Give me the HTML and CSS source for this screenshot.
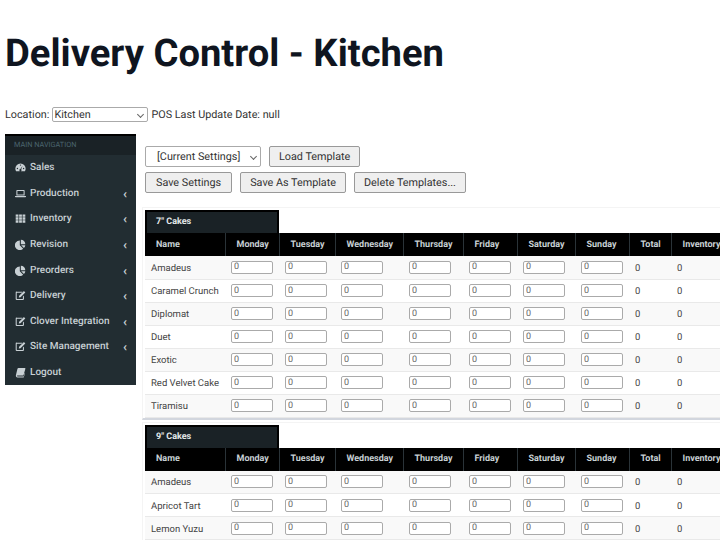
FILE: index.html
```html
<!DOCTYPE html>
<html lang="en">
<head>
  <meta charset="UTF-8" />
  <title>Delivery Control - Kitchen</title>
  <link rel="stylesheet" href="styles.css">
</head>
<body>
  <svg class="defs" width="0" height="0">
    <symbol id="i-gauge" viewBox="0 0 16 16"><path fill-rule="evenodd" d="M8 2a7.500 7.500 0 0 0-7.500 7.500c0 1.500.4 2.800 1.100 4h12.800c.7-1.200 1.100-2.500 1.100-4A7.500 7.500 0 0 0 8 2zM8 3.500a1 1 0 1 1 0 2 1 1 0 0 1 0-2zM3.500 8.500a1 1 0 1 1 0 2 1 1 0 0 1 0-2zM12.500 8.500a1 1 0 1 1 0 2 1 1 0 0 1 0-2zM11 5.500l-2 5a1.600 1.600 0 1 1-1.200-.4z"/></symbol>
    <symbol id="i-laptop" viewBox="0 0 16 16"><path fill-rule="evenodd" d="M3 3h10a1 1 0 0 1 1 1v7H2V4a1 1 0 0 1 1-1zM3.500 4.500v5h9v-5zM0 11.800h16v.7a1 1 0 0 1-1 1H1a1 1 0 0 1-1-1z"/></symbol>
    <symbol id="i-grid" viewBox="0 0 16 16"><path d="M1 2h4v3.500H1zM6 2h4v3.500H6zM11 2h4v3.500h-4zM1 6.300h4v3.500H1zM6 6.300h4v3.500H6zM11 6.300h4v3.500h-4zM1 10.600h4V14H1zM6 10.600h4V14H6zM11 10.600h4V14h-4z"/></symbol>
    <symbol id="i-pie" viewBox="0 0 16 16"><path d="M7 2.200v7l4.900 4.900A7 7 0 1 1 7 2.200zM8.500 1a6.500 6.500 0 0 1 6.500 6.500H8.500zM9 9h6a7 7 0 0 1-2 4.200z"/></symbol>
    <symbol id="i-edit" viewBox="0 0 16 16"><path fill-rule="evenodd" d="M3 2.500h8l-1.500 1.500H3a.5.5 0 0 0-.5.500v8a.5.5 0 0 0 .5.500h8a.5.5 0 0 0 .5-.5V9.500L13 8v5a1.500 1.500 0 0 1-1.500 1.500H2.500A1.500 1.500 0 0 1 1 13V4a1.500 1.500 0 0 1 2-1.500zM13 1.500l2 2-7 7-2.500.5.500-2.500z"/></symbol>
    <symbol id="i-book" viewBox="0 0 16 16"><path d="M5 1.500h9.500c.6 0 .7.400.6.900l-2.500 9c-.2.600-.5.800-1.100.8H3.500c-.6 0-.9.500-.7 1s.5.500 1 .5h8.700l1.500-5 .6.500-2 6H3.500C2 14.800 1 13.500 1.300 12L3.500 3c.2-.9.800-1.500 1.500-1.500z"/></symbol>
  </svg>

  <h1>Delivery Control - Kitchen</h1>

  <div class="location-row">
    <label for="location">Location:</label>
    <span class="select-wrap location-select"><select id="location"><option>Kitchen</option></select></span>
    <span>POS Last Update Date: null</span>
  </div>

  <div class="layout">
    <nav class="sidebar">
      <div class="nav-title">MAIN NAVIGATION</div>
      <a class="nav-item"><svg><use href="#i-gauge"/></svg><span>Sales</span></a>
      <a class="nav-item"><svg><use href="#i-laptop"/></svg><span>Production</span><i>‹</i></a>
      <a class="nav-item"><svg><use href="#i-grid"/></svg><span>Inventory</span><i>‹</i></a>
      <a class="nav-item"><svg><use href="#i-pie"/></svg><span>Revision</span><i>‹</i></a>
      <a class="nav-item"><svg><use href="#i-pie"/></svg><span>Preorders</span><i>‹</i></a>
      <a class="nav-item"><svg><use href="#i-edit"/></svg><span>Delivery</span><i>‹</i></a>
      <a class="nav-item"><svg><use href="#i-edit"/></svg><span>Clover Integration</span><i>‹</i></a>
      <a class="nav-item"><svg><use href="#i-edit"/></svg><span>Site Management</span><i>‹</i></a>
      <a class="nav-item"><svg><use href="#i-book"/></svg><span>Logout</span></a>
    </nav>

    <main class="content">
      <div class="toolbar">
        <span class="select-wrap template-select"><select><option>[Current Settings]</option></select></span>
        <button>Load Template</button>
      </div>
      <div class="toolbar">
        <button class="btn-wide">Save Settings</button>
        <button>Save As Template</button>
        <button>Delete Templates...</button>
      </div>

      <section class="panel">
        <div class="tab">7" Cakes</div>
        <table>
          <colgroup>
            <col class="c-name"><col class="c-mon"><col class="c-tue"><col class="c-wed"><col class="c-thu"><col class="c-fri"><col class="c-sat"><col class="c-sun"><col class="c-total"><col class="c-inv">
          </colgroup>
          <thead>
            <tr><th>Name</th><th>Monday</th><th>Tuesday</th><th>Wednesday</th><th>Thursday</th><th>Friday</th><th>Saturday</th><th>Sunday</th><th>Total</th><th>Inventory</th></tr>
          </thead>
          <tbody id="cakes7"></tbody>
        </table>
      </section>

      <section class="panel">
        <div class="tab">9" Cakes</div>
        <table>
          <colgroup>
            <col class="c-name"><col class="c-mon"><col class="c-tue"><col class="c-wed"><col class="c-thu"><col class="c-fri"><col class="c-sat"><col class="c-sun"><col class="c-total"><col class="c-inv">
          </colgroup>
          <thead>
            <tr><th>Name</th><th>Monday</th><th>Tuesday</th><th>Wednesday</th><th>Thursday</th><th>Friday</th><th>Saturday</th><th>Sunday</th><th>Total</th><th>Inventory</th></tr>
          </thead>
          <tbody id="cakes9"></tbody>
        </table>
      </section>
    </main>
  </div>

  <script>
    function remplir(id, noms) {
      const tbody = document.getElementById(id);
      noms.forEach(nom => {
        const row = tbody.insertRow();
        let html = `<td>${nom}</td>`;
        for (let i = 0; i < 7; i++) {
          html += `<td><input type="text" value="0"></td>`;
        }
        html += `<td>0</td><td>0</td>`;
        row.innerHTML = html;
      });
    }

    remplir("cakes7", ["Amadeus", "Caramel Crunch", "Diplomat", "Duet", "Exotic", "Red Velvet Cake", "Tiramisu"]);
    remplir("cakes9", ["Amadeus", "Apricot Tart", "Lemon Yuzu"]);
  </script>
</body>
</html>
```

FILE: styles.css
```css
* {
  box-sizing: border-box;
  font-family: 'Roboto', sans-serif;
  text-rendering: geometricPrecision;
}

html, body {
  height: 540px;
  overflow: hidden;
}

body {
  margin: 0;
  padding: 0 0 0 5px;
  background-color: #fff;
  color: #333;
  font-size: 10.8px;
}

.defs {
  position: absolute;
}

h1 {
  margin: 0;
  padding-top: 32px;
  height: 107px;
  font-size: 38.2px;
  line-height: 44px;
  font-weight: 700;
  color: #0f1520;
}

.location-row {
  display: flex;
  align-items: center;
  gap: 3px;
  height: 15px;
  color: #333;
}

.select-wrap {
  position: relative;
  display: block;
}

.select-wrap::after {
  content: "";
  position: absolute;
  top: 50%;
  right: 5px;
  width: 4px;
  height: 4px;
  margin-top: -3px;
  border-right: 1px solid #666;
  border-bottom: 1px solid #666;
  transform: rotate(45deg);
}

.select-wrap select {
  display: block;
  width: 100%;
  height: 100%;
  appearance: none;
  font-size: 10.8px;
  color: #333;
  background-color: #fff;
  border: 1px solid #aaa;
  border-radius: 2px;
}

.location-select {
  width: 96px;
  height: 15px;
}

.location-select select {
  padding: 0 0 0 1px;
}

.layout {
  display: flex;
  align-items: flex-start;
  margin-top: 12px;
}

.sidebar {
  flex: 0 0 131px;
  height: 251px;
  background-color: #222d32;
  border-top: 2px solid #000;
  color: #c8d0d4;
}

.nav-title {
  height: 19px;
  padding: 3px 0 0 9px;
  background-color: #1a2226;
  color: #4b646f;
  font-size: 7.3px;
  line-height: 11px;
}

.nav-item {
  display: flex;
  align-items: center;
  height: 25.6px;
  padding: 0 9px 0 10px;
  font-size: 10px;
  font-weight: 500;
}

.nav-item svg {
  flex: 0 0 11px;
  width: 11px;
  height: 11px;
  margin-right: 4px;
  fill: #c8d0d4;
}

.nav-item span {
  flex: 1;
  white-space: nowrap;
}

.nav-item i {
  font-style: normal;
  font-weight: 700;
  font-size: 13px;
  line-height: 13px;
  padding-top: 2px;
}

.content {
  flex: 0 0 auto;
  width: 590px;
  margin-left: 6px;
  padding-top: 12px;
}

.toolbar {
  display: flex;
  gap: 8px;
  height: 21px;
  margin: 0 0 5px 3px;
}

.toolbar button {
  padding: 0 9px;
  height: 21px;
  font-size: 10.8px;
  color: #333;
  background-color: #efefef;
  border: 1px solid #999;
  border-radius: 2px;
}

.toolbar .btn-wide {
  padding: 0 10px;
}

.template-select {
  width: 116px;
  height: 21px;
}

.template-select select {
  padding-left: 11px;
}

.panel {
  border-top: 1px solid #f4f4f4;
  border-left: 1px solid #f4f4f4;
  border-bottom: 2px solid #d2d6de;
  padding: 2px 0 0 2px;
  margin-top: 2px;
}

.panel:last-child {
  border-bottom: none;
}

.toolbar + .panel {
  margin-top: 14px;
}

.tab {
  width: 134px;
  height: 23px;
  padding: 0 0 0 9px;
  line-height: 21px;
  background-color: #1a2226;
  border: 2px solid #000;
  border-bottom: none;
  color: #e4e8ea;
  font-size: 9px;
  font-weight: 700;
}

table {
  width: 600px;
  table-layout: fixed;
  border-collapse: collapse;
  font-size: 9.5px;
}

.c-name { width: 80px; }
.c-mon { width: 54px; }
.c-tue { width: 56px; }
.c-wed { width: 68px; }
.c-thu { width: 60px; }
.c-fri { width: 54px; }
.c-sat { width: 58px; }
.c-sun { width: 54px; }
.c-total { width: 42px; }
.c-inv { width: 74px; }

th {
  height: 23px;
  padding: 0 0 0 11px;
  text-align: left;
  white-space: nowrap;
  background-color: #000;
  color: #c8d0d4;
  font-size: 9px;
  font-weight: 700;
  border-right: 1px solid #2a3338;
}

td {
  height: 23px;
  padding: 0 0 0 6px;
  color: #444;
  border-bottom: 1px solid #e9e9e9;
  white-space: nowrap;
}

td:first-child,
td:nth-child(n+9) {
  padding-top: 2px;
}

tbody tr:nth-child(odd) {
  background-color: #f9f9f9;
}

td input {
  display: block;
  width: 42px;
  height: 13px;
  padding: 0 2px;
  font-size: 9px;
  color: #666;
  background-color: #fff;
  border: 1px solid #aaa;
  border-radius: 2px;
}
```
